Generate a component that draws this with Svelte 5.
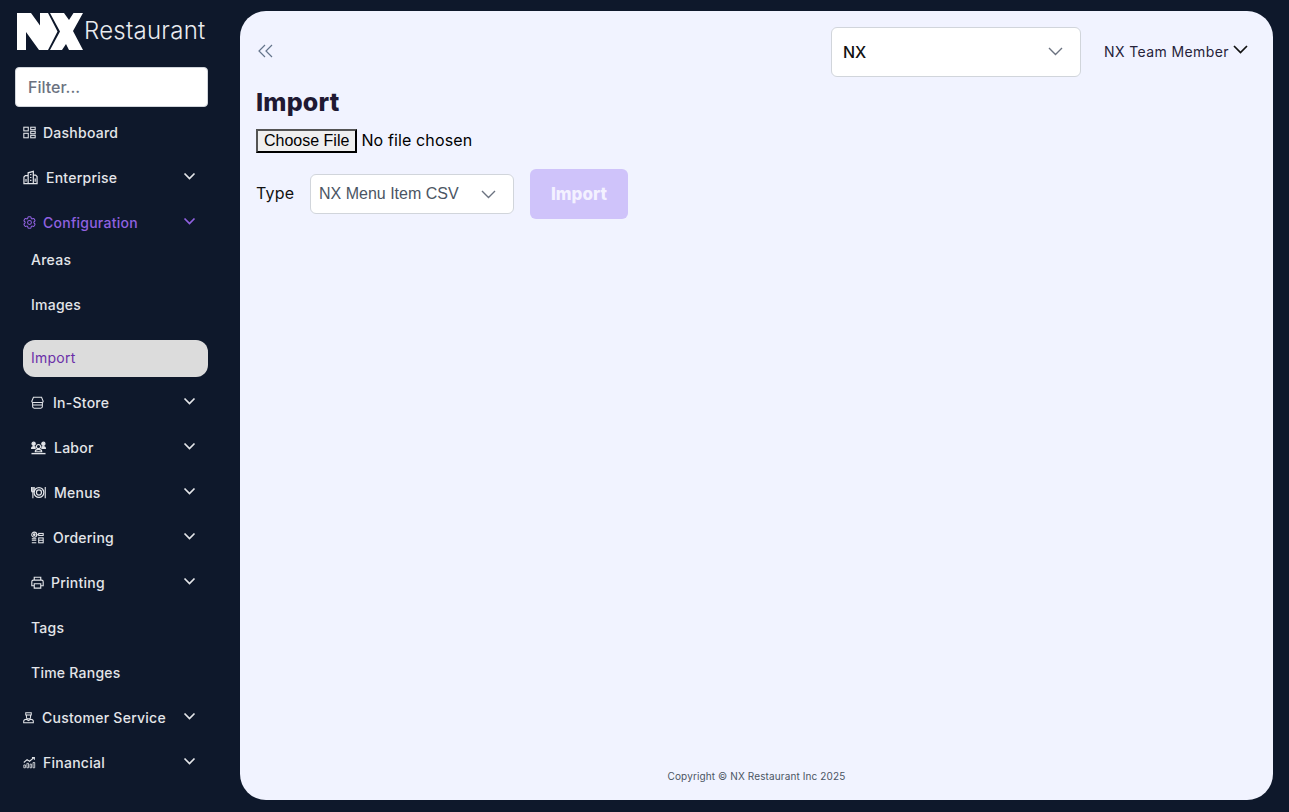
<script>
  const chevron = 'M1.5 1.5 L6.5 6.5 L11.5 1.5';
</script>

{#snippet icon(name)}
  <svg class="ico {name}" viewBox="0 0 16 16" fill="none" stroke="currentColor" stroke-width="1.3" aria-hidden="true">
    {#if name === 'dash'}
      <rect x="1" y="1.500" width="5.500" height="4.500"/><rect x="1" y="9" width="5.500" height="5.500"/><rect x="9.500" y="1.500" width="5.500" height="3"/><rect x="9.500" y="6.500" width="5.500" height="3"/><rect x="9.500" y="11.500" width="5.500" height="3"/>
    {:else if name === 'ent'}
      <path d="M5.500 14.500V3L11 1.500V14.500H5.500ZM5.500 6H2.500L1 7.500V14.500H5.500M11 5.500H13.500L15 7V14.500H11M7.500 5H9M7.500 8H9M7.500 11H9M3.200 9.500V12.500M13 9V12.500"/>
    {:else if name === 'gear'}
      <g transform="translate(-1.500 -1.500) scale(.79)" stroke-width="1.600">
        <path d="M9.594 3.94c.09-.542.56-.94 1.11-.94h2.593c.55 0 1.02.398 1.11.94l.213 1.281c.063.374.313.686.645.87.074.04.147.083.22.127.325.196.72.257 1.075.124l1.217-.456a1.125 1.125 0 0 1 1.37.49l1.296 2.247a1.125 1.125 0 0 1-.26 1.431l-1.003.827c-.293.241-.438.613-.43.992a7.723 7.723 0 0 1 0 .255c-.008.378.137.75.43.991l1.004.827c.424.35.534.955.26 1.43l-1.298 2.247a1.125 1.125 0 0 1-1.369.491l-1.217-.456c-.355-.133-.75-.072-1.076.124a6.47 6.47 0 0 1-.22.128c-.331.183-.581.495-.644.869l-.213 1.281c-.09.543-.56.94-1.11.94h-2.594c-.55 0-1.019-.398-1.11-.94l-.213-1.281c-.062-.374-.312-.686-.644-.87a6.52 6.52 0 0 1-.22-.127c-.325-.196-.72-.257-1.076-.124l-1.217.456a1.125 1.125 0 0 1-1.369-.49l-1.297-2.247a1.125 1.125 0 0 1 .26-1.431l1.004-.827c.292-.24.437-.613.43-.991a6.932 6.932 0 0 1 0-.255c.007-.38-.138-.751-.43-.992l-1.004-.827a1.125 1.125 0 0 1-.26-1.43l1.297-2.247a1.125 1.125 0 0 1 1.37-.491l1.216.456c.356.133.751.072 1.076-.124.072-.044.146-.086.22-.128.332-.183.582-.495.644-.869l.214-1.28Z"/>
        <path d="M15 12a3 3 0 1 1-6 0 3 3 0 0 1 6 0Z"/>
      </g>
    {:else if name === 'store'}
      <path d="M2 8V13Q2 15 4 15H12Q14 15 14 13V8M1 6.500L3 1.500H13L15 6.500Q15 8 13.500 8H2.500Q1 8 1 6.500ZM2 11H14"/>
    {:else if name === 'labor'}
      <circle cx="8" cy="7" r="2.200" stroke-width="1.100"/><circle cx="2.800" cy="4" r="1.700" fill="currentColor"/><circle cx="13.200" cy="4" r="1.700" fill="currentColor"/>
      <path d="M4.500 12.500Q4.500 10 8 10T11.500 12.500H4.500Z" stroke-width="1.100"/>
      <path d="M0 9.500Q0 6.500 2.800 6.500T5 7.500V9.500H0ZM16 9.500Q16 6.500 13.200 6.500T11 7.500V9.500H16Z" fill="currentColor" stroke="none"/>
      <path d="M0.500 14.500H15.500" stroke-width="1.500"/>
    {:else if name === 'menu'}
      <circle cx="8.500" cy="8" r="5.200"/><circle cx="8.500" cy="8" r="2.700"/><path d="M2 2V14M0.600 2V6Q0.600 7.500 2 7.500T3.400 6V2M15.200 2V14" stroke-width="1.200"/>
    {:else if name === 'order'}
      <circle cx="4" cy="4.500" r="3.100"/><circle cx="4" cy="4.500" r="1" fill="currentColor"/><rect x="9.500" y="3" width="5.500" height="2.500"/><rect x="9.500" y="8.500" width="5.500" height="6"/><path d="M1 9.500H6.500M1 11.500H6.500M1 14.500H6.500M7 4.500H9.500M9.500 11.500H15"/>
    {:else if name === 'print'}
      <path d="M4 5V1.500H12V5M4 12H1V7Q1 5 3 5H13Q15 5 15 7V12H12M4 9.500H12V15H4V9.500Z" stroke-width="1.400"/>
    {:else if name === 'cust'}
      <path d="M4 1H12V4.500H4ZM5 4.500V7.500Q5 10 8 10T11 7.500V4.500M1 15.500V13.500Q1 11 5 10.500L8 12.500L11 10.500Q15 11 15 13.500V15.500H1Z" stroke-width="1.500"/>
    {:else if name === 'fin'}
      <path d="M1 8L5 4.500L8 6.500L13.500 2M11 2H14V4.500"/>
      <path d="M1 14.500V11H3V14.500ZM4.800 14.500V9H6.800V14.500ZM8.600 14.500V10H10.600V14.500ZM12.400 14.500V8H14.400V14.500Z" stroke-width="1"/>
    {/if}
  </svg>
{/snippet}

{#snippet chev()}
  <svg class="chev" viewBox="0 0 13 8" fill="none" stroke="currentColor" stroke-width="1.700" aria-hidden="true"><path d={chevron}/></svg>
{/snippet}

{#snippet row(name, label, cls = '')}
  <div class="item {cls}">
    {@render icon(name)}
    <span class="label">{label}</span>
    {#if name !== 'dash'}{@render chev()}{/if}
  </div>
{/snippet}

<div class="shell">
  <aside class="side">
    <div class="brand">
      <svg class="mark" viewBox="0 0 66 37" aria-label="NX logo" role="img">
        <path fill="#fff" d="M0 0H14L23 12.500V0H31L40.500 18.500L31 37H22L9 19V37H0Z"/>
        <path fill="#fff" d="M33 0H47L52 7L56.500 0H66L56 18L66 37H52L49 31L45 37H33L43 18.500Z"/>
      </svg>
      <span class="word">Restaurant</span>
    </div>
    <input class="filter" placeholder="Filter..." />
    <nav class="nav">
      {@render row('dash', 'Dashboard')}
      {@render row('ent', 'Enterprise')}
      {@render row('gear', 'Configuration', 'open')}
      <div class="item sub">Areas</div>
      <div class="item sub">Images</div>
      <div class="item sub active">Import</div>
      {@render row('store', 'In-Store', 'nested')}
      {@render row('labor', 'Labor', 'nested')}
      {@render row('menu', 'Menus', 'nested')}
      {@render row('order', 'Ordering', 'nested')}
      {@render row('print', 'Printing', 'nested')}
      <div class="item sub">Tags</div>
      <div class="item sub">Time Ranges</div>
      {@render row('cust', 'Customer Service')}
      {@render row('fin', 'Financial')}
    </nav>
  </aside>

  <main class="main">
    <header class="top">
      <svg class="collapse" viewBox="0 0 15 14" fill="none" stroke="currentColor" stroke-width="1.200" aria-hidden="true"><path d="M7 1L1 7L7 13M14 1L8 7L14 13"/></svg>
      <div class="tenant">
        <span>NX</span>
        <svg viewBox="0 0 15 9" fill="none" stroke="currentColor" stroke-width="1.400" aria-hidden="true"><path d="M1 1L7.500 7.500L14 1"/></svg>
      </div>
      <div class="user">
        <span>NX Team Member</span>
        <svg viewBox="0 0 15 9" fill="none" stroke="currentColor" stroke-width="1.700" aria-hidden="true"><path d="M1 1L7.500 7.500L14 1"/></svg>
      </div>
    </header>
    <h1>Import</h1>
    <input class="file" type="file" />
    <div class="form">
      <span class="type">Type</span>
      <div class="select">
        <span>NX Menu Item CSV</span>
        <svg viewBox="0 0 15 9" fill="none" stroke="currentColor" stroke-width="1.400" aria-hidden="true"><path d="M1 1L7.500 7.500L14 1"/></svg>
      </div>
      <button class="go" disabled>Import</button>
    </div>
    <footer>Copyright © NX Restaurant Inc 2025</footer>
  </main>
</div>

<style>
  :global(body) {
    margin: 0;
    background: #0e182b;
  }
  .shell {
    display: flex;
    height: 812px;
    font-family: Inter, "Liberation Sans", sans-serif;
    overflow: hidden;
  }
  .side {
    width: 240px;
    flex: none;
    display: flex;
    flex-direction: column;
    padding: 12px 32px 0 15px;
    box-sizing: border-box;
  }
  .brand {
    display: flex;
    align-items: center;
    height: 38px;
    padding-left: 2px;
    color: #e9ebef;
  }
  .mark {
    width: 66px;
    height: 37px;
    flex: none;
  }
  .word {
    font-size: 24px;
    font-weight: 300;
    letter-spacing: 0.25px;
    margin-left: 1px;
    position: relative;
    top: -1px;
  }
  .filter {
    width: 193px;
    height: 40px;
    box-sizing: border-box;
    margin-top: 17px;
    padding: 0 12px;
    border: 1px solid #d1d5db;
    border-radius: 4px;
    background: #fff;
    font: 450 16px Inter, sans-serif;
  }
  .filter::placeholder {
    color: #6b7280;
  }
  .nav {
    display: flex;
    flex-direction: column;
    gap: 8px;
    margin-top: 7.500px;
    padding-left: 8px;
    width: 185px;
  }
  .item {
    height: 37px;
    box-sizing: border-box;
    padding-bottom: 2px;
    display: flex;
    align-items: center;
    color: #e3e5e9;
    font-size: 14px;
    font-weight: 450;
    letter-spacing: 0.25px;
    position: relative;
    flex: none;
  }
  .ico {
    width: 13px;
    height: 13px;
    flex: none;
    margin-right: 7px;
  }
  .ico.ent,
  .ico.labor,
  .ico.menu {
    width: 15px;
    height: 15px;
    margin-right: 8px;
  }
  .ico.store,
  .ico.order {
    margin-right: 9px;
  }
  .ico.cust {
    width: 11px;
    margin-right: 8px;
  }
  .chev {
    position: absolute;
    left: 160px;
    top: 12px;
    width: 13px;
    height: 8px;
    color: #e3e5e9;
  }
  .open {
    color: #9061e0;
    margin-bottom: -8px;
  }
  .open .chev {
    color: #9061e0;
  }
  .sub {
    padding-left: 8px;
    border-radius: 12px;
  }
  .active {
    background: #dcdcdc;
    color: #6b2fa8;
    margin-top: 8px;
    font-weight: 400;
  }
  .nested {
    padding-left: 8px;
  }
  .main {
    margin: 11px 16px 12px 0;
    flex: 1;
    min-width: 0;
    background: #f1f3ff;
    border-radius: 26px;
    padding: 16px 16px 0;
    box-sizing: border-box;
    display: flex;
    flex-direction: column;
  }
  .top {
    display: flex;
    align-items: center;
    height: 50px;
  }
  .collapse {
    width: 15px;
    height: 14px;
    margin: 0 0 2px 2px;
    color: #64748b;
  }
  .tenant {
    margin-left: auto;
    width: 250px;
    height: 50px;
    box-sizing: border-box;
    border: 1px solid #d1d5db;
    border-radius: 6px;
    background: #fff;
    display: flex;
    align-items: center;
    justify-content: space-between;
    padding: 0 17px 1px 11px;
    font-size: 16px;
    font-weight: 450;
    color: #111;
  }
  .tenant svg {
    width: 15px;
    height: 9px;
    color: #6b7280;
  }
  .user {
    display: flex;
    align-items: center;
    margin-left: 23px;
    margin-right: 9px;
    font-size: 14px;
    color: #26233a;
    letter-spacing: 0.4px;
    padding-bottom: 1px;
  }
  .user svg {
    width: 15px;
    height: 9px;
    margin-left: 4px;
    position: relative;
    top: -2px;
    color: #111;
  }
  h1 {
    margin: 9px 0 0;
    font-size: 25px;
    line-height: 32px;
    font-weight: 800;
    letter-spacing: 0.2px;
    color: #1f1933;
  }
  .file {
    margin-top: 11px;
    height: 24px;
    font-family: Inter, sans-serif;
    font-size: 16px;
    letter-spacing: 0.13px;
    color: #000;
    display: block;
  }
  .file::file-selector-button {
    font: 16px "Liberation Sans", sans-serif;
    letter-spacing: 0;
    height: 24px;
    padding: 0 6px;
    margin-right: 4px;
    border: 2px outset #000;
    background: #efefef;
    color: #000;
  }
  .form {
    display: flex;
    align-items: center;
    margin-top: 16px;
    height: 50px;
  }
  .type {
    font-size: 16px;
    letter-spacing: 0.2px;
    color: #111;
    width: 38px;
    padding-bottom: 2px;
  }
  .select {
    margin-left: 16px;
    width: 204px;
    height: 40px;
    box-sizing: border-box;
    border: 1px solid #d1d5db;
    border-radius: 6px;
    background: #fff;
    display: flex;
    align-items: center;
    justify-content: space-between;
    padding: 0 17px 0 8px;
    font: 16px "Liberation Sans", sans-serif;
    color: #4b5563;
  }
  .select svg {
    width: 15px;
    height: 9px;
    color: #6b7280;
  }
  .go {
    margin-left: 16px;
    width: 98px;
    height: 50px;
    border: 0;
    border-radius: 6px;
    padding-bottom: 2px;
    background: #cfc3fa;
    color: #f3f1ff;
    font: 800 17px Inter, sans-serif;
  }
  footer {
    margin-top: auto;
    margin-bottom: 18px;
    text-align: center;
    font-size: 10px;
    letter-spacing: 0.12px;
    color: #4b5563;
  }
</style>
